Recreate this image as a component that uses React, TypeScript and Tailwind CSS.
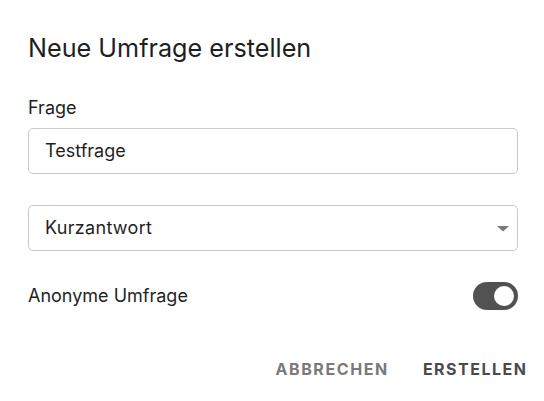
import React from "react";

export default function App() {
  return (
    <div
      className="w-[544px] h-[401px] bg-white text-[#1f1f1f] overflow-hidden"
      style={{ fontFamily: "Inter, 'Noto Sans', sans-serif" }}
    >
      <div className="pl-[28px] pr-[26px] pt-[32px]">
        <h1 className="text-[25.2px] leading-[32px] font-normal text-[#1f1f1f]">
          Neue Umfrage erstellen
        </h1>
        <div className="mt-[32px] text-[18px] leading-[24px]">Frage</div>
        <div className="mt-[8px] h-[46px] rounded-[5px] border border-[#c9c9c9] flex items-center px-[16px] text-[18px] leading-[24px]">
          Testfrage
        </div>
        <div className="mt-[31px] h-[46px] rounded-[5px] border border-[#c9c9c9] flex items-center justify-between pl-[16px] pr-[8px] text-[18px] leading-[24px]">
          <span className="tracking-[0.3px]">Kurzantwort</span>
          <svg width="12" height="6" viewBox="0 0 12 6" className="mt-[2px]">
            <polygon points="0,0 12,0 6,5.5" fill="#7a7a7a" />
          </svg>
        </div>
        <div className="mt-[31px] h-[28px] flex items-center justify-between text-[18px] leading-[24px]">
          <span>Anonyme Umfrage</span>
          <div className="w-[45px] h-[28px] rounded-full bg-[#525252] flex items-center justify-end pr-[4px]">
            <div className="w-[20px] h-[20px] rounded-full bg-white" />
          </div>
        </div>
      </div>
      <div className="mt-[47px] flex justify-end gap-[34px] pr-[18px] text-[16px] leading-[24px] font-bold">
        <span className="text-[#7a7a7a] tracking-[1.6px]">ABBRECHEN</span>
        <span className="text-[#4a4a4a] tracking-[1.5px] mr-[-1.5px]">ERSTELLEN</span>
      </div>
    </div>
  );
}
